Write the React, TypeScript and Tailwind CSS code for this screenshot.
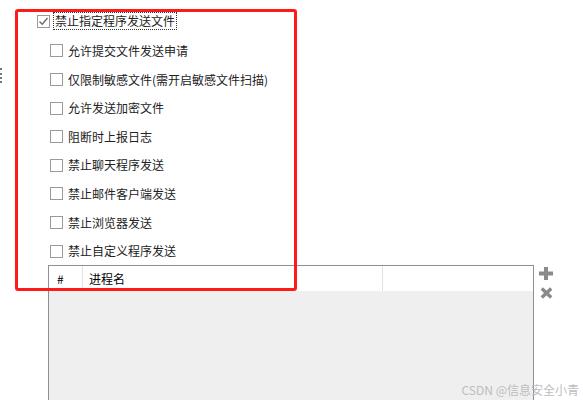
import React from "react";

const options = [
  "允许提交文件发送申请",
  "仅限制敏感文件(需开启敏感文件扫描)",
  "允许发送加密文件",
  "阻断时上报日志",
  "禁止聊天程序发送",
  "禁止邮件客户端发送",
  "禁止浏览器发送",
  "禁止自定义程序发送",
];

function Box({ checked }: { checked?: boolean }) {
  return (
    <span className="w-[13px] h-[13px] border border-[#9a9a9a] bg-white flex items-center justify-center shrink-0">
      {checked && (
        <svg width="11" height="11" viewBox="0 0 11 11">
          <path d="M1.5 5.5 L4.2 8.3 L9.5 2" fill="none" stroke="#6b6b6b" strokeWidth="1.4" />
        </svg>
      )}
    </span>
  );
}

export default function App() {
  return (
    <div
      className="relative w-[583px] h-[400px] overflow-hidden bg-white text-[12px] text-[#222]"
      style={{ fontFamily: '"Noto Sans CJK SC", "Noto Sans", sans-serif' }}
    >
      <div className="pt-[7px]">
        <div className="h-[28px] mb-[1.7px] pl-[37px] flex items-center gap-[3px]">
          <Box checked />
          <span className="border border-dotted border-[#333] px-[1px] leading-[16px]">禁止指定程序发送文件</span>
        </div>
        {options.map((o) => (
          <div key={o} className="h-[28.6px] pl-[50px] flex items-center gap-[5px]">
            <Box />
            <span className="leading-[16px]">{o}</span>
          </div>
        ))}
      </div>

      <div className="flex">
        <div className="ml-[48px] w-[486px] h-[140px] border border-[#8e8e96] border-b-0 bg-[#efefef] flex flex-col">
          <div className="h-[25px] bg-white flex items-center text-black">
            <div className="w-[34px] h-full flex items-center pl-[8px] border-r border-[#e2e2e2]">#</div>
            <div className="w-[300px] h-full flex items-center pl-[6px] border-r border-[#e2e2e2]">进程名</div>
            <div className="flex-1 h-full" />
          </div>
        </div>
        <div className="ml-[5px] pt-[2px] flex flex-col gap-[7px]">
          <svg width="14" height="13" viewBox="0 0 14 13">
            <path d="M5 0h4v4.5h5v4H9V13H5V8.5H0v-4h5z" fill="#8a8a8a" />
          </svg>
          <svg width="13" height="12" viewBox="0 0 13 12" className="ml-[1px]">
            <path d="M1.8 1.5 L11.2 10.5 M11.2 1.5 L1.8 10.5" stroke="#8a8a8a" strokeWidth="3.4" />
          </svg>
        </div>
      </div>

      <div className="absolute left-[0px] top-[68px] h-[15px] border-l-2 border-dotted border-[#777]" />

      <div className="absolute left-[15px] top-[9px] w-[282px] h-[282px] border-[3px] border-[#ff1a1a] rounded-[3px] pointer-events-none" />

      <div className="absolute right-[4px] top-[382px] text-[12px] text-[#bdbdbd] leading-[16px]">
        CSDN @信息安全小青
      </div>
    </div>
  );
}
